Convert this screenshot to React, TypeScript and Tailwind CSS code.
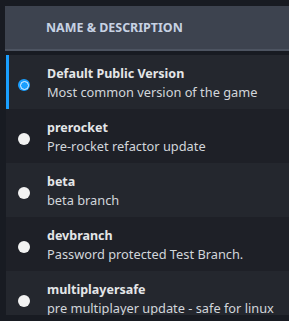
// Branch picker list (beta selection)
const branches = [
  { name: 'Default Public Version', desc: 'Most common version of the game' },
  { name: 'prerocket', desc: 'Pre-rocket refactor update' },
  { name: 'beta', desc: 'beta branch' },
  { name: 'devbranch', desc: 'Password protected Test Branch.' },
  { name: 'multiplayersafe', desc: 'pre multiplayer update - safe for linux' },
];

function Radio({ checked }: { checked: boolean }) {
  if (checked) {
    return (
      <span className="mt-[3px] flex h-[12px] w-[12px] shrink-0 items-center justify-center rounded-full bg-[#1a9fff]">
        <span className="h-[9px] w-[9px] rounded-full border-[1.5px] border-[#e8f3ff] bg-[#1a9fff]" />
      </span>
    );
  }
  return <span className="mt-[3px] h-[12px] w-[12px] shrink-0 rounded-full bg-[#f2f2f2]" />;
}

export default function App() {
  const selected = 0;

  return (
    <div
      className="h-[321px] w-[289px] overflow-hidden bg-[#181b22] pl-[5px] pt-[6px]"
      style={{ fontFamily: '"Noto Sans", "Open Sans", sans-serif' }}
    >
      <div className="flex h-[45px] items-center border-b-2 border-[#4d5461] bg-[#3d434f] pl-[41px] pt-[1px]">
        <span className="text-[12.45px] font-bold uppercase text-[#c7d2e3]">
          Name &amp; Description
        </span>
      </div>

      <div className="mt-[4px] ml-[1px] h-[260px] overflow-hidden">
        {branches.map((b, i) => (
          <div
            key={b.name}
            className={`relative flex h-[54px] items-center gap-[17px] pl-[12px] pt-[3px] ${
              i % 2 === 0 ? 'bg-[#24272e]' : 'bg-[#1e2027]'
            }`}
          >
            {i === selected && (
              <span className="absolute left-0 top-0 h-full w-[3px] bg-[#1a9fff]" />
            )}
            <Radio checked={i === selected} />
            <div className="flex flex-col">
              <span className="text-[12.5px] font-bold leading-[18px] text-[#e4e6e8]">{b.name}</span>
              <span className="text-[12.8px] leading-[19px] text-[#d2d6db] whitespace-nowrap">{b.desc}</span>
            </div>
          </div>
        ))}
      </div>
    </div>
  );
}
